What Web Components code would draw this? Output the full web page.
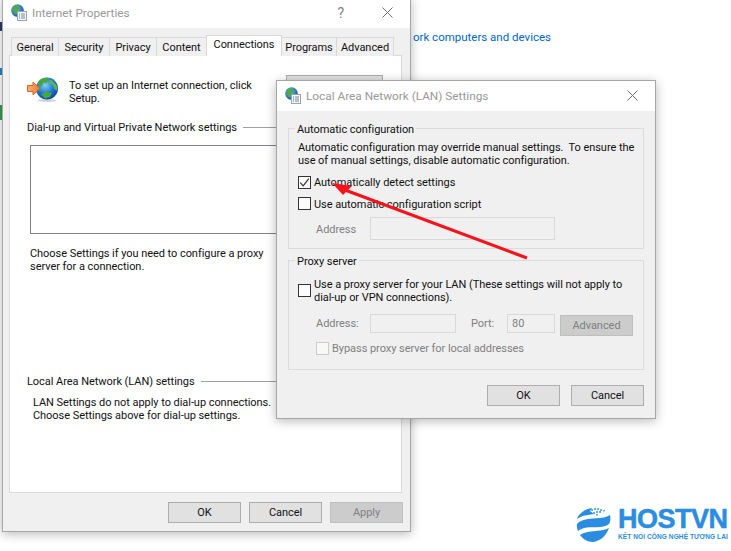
<!DOCTYPE html>
<html>
<head>
<meta charset="utf-8">
<title>LAN Settings</title>
<style>
  html, body { margin: 0; padding: 0; background: #fff; }
  body { width: 731px; height: 551px; overflow: hidden; font: 11px/13px Roboto, sans-serif; letter-spacing: -.05px; color: #111; }
</style>
</head>
<body>
<win-desktop>
  <win-window slot="main" heading="Internet Properties" help style="left:2px;top:-3px;width:409px;height:535px;">
    <win-tabs active="Connections" tabs="General,Security,Privacy,Content,Connections,Programs,Advanced">
      <connections-page></connections-page>
    </win-tabs>
    <win-footer pad="9px 7px 0 0">
      <win-button>OK</win-button>
      <win-button>Cancel</win-button>
      <win-button disabled>Apply</win-button>
    </win-footer>
  </win-window>
  <win-window slot="dialog" heading="Local Area Network (LAN) Settings" style="left:276px;top:80px;width:380px;height:339px;">
    <lan-dialog></lan-dialog>
  </win-window>
</win-desktop>
<script>
"use strict";

const FONT = 'Roboto, sans-serif';

class WinDesktop extends HTMLElement {
  constructor() {
    super();
    const shadowRootEl = this.attachShadow({mode: 'open'});
    shadowRootEl.innerHTML = `
      <style>
        :host { display: block; position: relative; width: 731px; height: 551px; overflow: hidden; background: #fff; }
        .edge { position: absolute; left: 0; top: 0; }
        .link { position: absolute; right: 180px; top: 30px; color: #0066cc; white-space: nowrap; font: 11.5px/14px ${FONT}; letter-spacing: 0; }
        ::slotted(win-window) { position: absolute; }
      </style>
      <svg class="edge" width="3" height="130">
        <rect x="0" y="22" width="2" height="9" fill="#2b3a6a"/>
        <rect x="0" y="68" width="2" height="7" fill="#2a7fc9"/>
        <rect x="0" y="105" width="2" height="15" fill="#3a9a50"/>
      </svg>
      <div class="link">ork computers and devices</div>
      <slot name="main"></slot>
      <slot name="dialog"></slot>
      <red-arrow></red-arrow>
      <hostvn-logo></hostvn-logo>
    `;
  }
}

class WinWindow extends HTMLElement {
  constructor() {
    super();
    const shadowRootEl = this.attachShadow({mode: 'open'});
    shadowRootEl.innerHTML = `
      <style>
        :host { display: flex; flex-direction: column; box-sizing: border-box; background: #f0f0f0; border: 1px solid #a6a6a6; box-shadow: 0 2px 10px rgba(0,0,0,.28); }
        .bar { flex: none; height: 30px; display: flex; align-items: center; background: #fff; padding: 0 0 1px 8px; box-sizing: border-box; }
        .name { margin-left: 5px; color: #999; font: 11.8px/16px ${FONT}; letter-spacing: 0; white-space: nowrap; flex: 1; }
        .help { color: #808080; font: 14px/16px ${FONT}; margin-right: 38px; }
        svg.x { margin-right: 17px; }
        .body { flex: 1; min-height: 0; }
      </style>
      <div class="bar">
        <small-globe></small-globe>
        <span class="name"></span>
        <span class="help"></span>
        <svg class="x" width="11" height="11" viewBox="0 0 11 11"><path d="M.5.5l10 10M10.500.5l-10 10" stroke="#6e6e6e" fill="none"/></svg>
      </div>
      <div class="body"><slot></slot></div>
    `;
    shadowRootEl.querySelector('.name').textContent = this.getAttribute('heading');
    if (this.hasAttribute('help')) {
      shadowRootEl.querySelector('.help').textContent = '?';
    }
  }
}

class SmallGlobe extends HTMLElement {
  constructor() {
    super();
    const shadowRootEl = this.attachShadow({mode: 'open'});
    shadowRootEl.innerHTML = `
      <style>:host { display: block; width: 16px; height: 17px; flex: none; } svg { display: block; }</style>
      <svg width="16" height="17" viewBox="0 0 16 17">
        <defs><radialGradient id="g" cx=".4" cy=".35" r=".7"><stop offset="0" stop-color="#6cc0f0"/><stop offset="1" stop-color="#12509f"/></radialGradient></defs>
        <circle cx="6.500" cy="6.500" r="6.300" fill="url(#g)"/>
        <path d="M2 3.500C4 1.500 7 1 8.500 1.500L9 4 6.500 6 7 9 4.500 10.500 2.500 8 1 6.500z" fill="#4fa84a"/>
        <path d="M9 8l3-1-1 3.500-2 1z" fill="#4fa84a"/>
        <rect x="6.500" y="7.500" width="9" height="9" fill="#f4f7fa" stroke="#9aa3ad"/>
        <path d="M8 10h1M8 12h1M8 14h1" stroke="#2a7fc9"/>
        <path d="M10 10h4M10 12h4M10 14h4" stroke="#7c8791"/>
      </svg>
    `;
  }
}

class BigGlobe extends HTMLElement {
  constructor() {
    super();
    const shadowRootEl = this.attachShadow({mode: 'open'});
    shadowRootEl.innerHTML = `
      <style>:host { display: block; width: 32px; height: 27px; flex: none; } svg { display: block; }</style>
      <svg width="32" height="27" viewBox="0 0 32 27">
        <defs>
          <radialGradient id="s" cx=".42" cy=".35" r=".72"><stop offset="0" stop-color="#7fd0f5"/><stop offset=".55" stop-color="#1c77cf"/><stop offset="1" stop-color="#0a3d8c"/></radialGradient>
          <linearGradient id="a" x1="0" x2="1"><stop offset="0" stop-color="#f7b27a"/><stop offset="1" stop-color="#ee7a2a"/></linearGradient>
        </defs>
        <ellipse cx="20" cy="24.500" rx="9" ry="1.500" fill="#c9d3da"/>
        <circle cx="20" cy="12.500" r="11" fill="url(#s)"/>
        <path d="M11 6C13 3 17 1.500 20 1.700L22 4 19 7 16 6.500 15 10 12.500 11z" fill="#46a83c"/>
        <path d="M22 3.500C25 4 28.500 7 30 10.500L30.500 15 27.500 13 26 9 23 7z" fill="#5cb848"/>
        <path d="M14 18.500l5-3 6 1.500-2 4-5 1.500z" fill="#46a83c"/>
        <path d="M.5 9.500H6V6l7 6.500L6 19v-3.500H.5z" fill="url(#a)" stroke="#d8641c"/>
      </svg>
    `;
  }
}

class WinTabs extends HTMLElement {
  constructor() {
    super();
    const shadowRootEl = this.attachShadow({mode: 'open'});
    shadowRootEl.innerHTML = `
      <style>
        :host { display: block; padding: 7px 0 0 6px; }
        .strip { display: flex; align-items: flex-end; height: 21px; padding-left: 2px; position: relative; z-index: 1; margin-bottom: -1px; }
        .tab { box-sizing: border-box; height: 19px; padding-top: 3px; text-align: center; border: 1px solid #d9d9d9; border-left-width: 0; border-bottom: 0; background: #f0f0f0; white-space: nowrap; }
        .tab:first-child { border-left-width: 1px; }
        .tab.on { height: 21px; background: #fff; padding-top: 2px; border-left-width: 1px; margin-left: -1px; }
        .panel { box-sizing: border-box; width: 393px; height: 438px; background: #fff; border: 1px solid #d9d9d9; }
      </style>
      <div class="strip"></div>
      <div class="panel"><slot></slot></div>
    `;
    const widths = {General: 48, Security: 51, Privacy: 47, Content: 50, Connections: 76, Programs: 55, Advanced: 57};
    const stripEl = shadowRootEl.querySelector('.strip');
    this.getAttribute('tabs').split(',').forEach((name) => {
      const tabEl = document.createElement('div');
      tabEl.className = name === this.getAttribute('active') ? 'tab on' : 'tab';
      tabEl.style.width = widths[name] + 'px';
      tabEl.textContent = name;
      stripEl.appendChild(tabEl);
    });
  }
}

class WinButton extends HTMLElement {
  constructor() {
    super();
    const shadowRootEl = this.attachShadow({mode: 'open'});
    shadowRootEl.innerHTML = `
      <style>
        :host { display: flex; align-items: center; justify-content: center; box-sizing: border-box; flex: none; width: var(--btn-w, 73px); height: 21px; background: #e1e1e1; border: 1px solid #adadad; color: #111; }
        :host([disabled]) { background: #cccccc; border-color: #bfbfbf; color: #808080; }
      </style>
      <slot></slot>
    `;
  }
}

class WinFooter extends HTMLElement {
  constructor() {
    super();
    const shadowRootEl = this.attachShadow({mode: 'open'});
    shadowRootEl.innerHTML = `
      <style>:host { display: flex; justify-content: flex-end; gap: var(--gap, 8px); }</style>
      <slot></slot>
    `;
    this.style.padding = this.getAttribute('pad');
  }
}

class WinSection extends HTMLElement {
  constructor() {
    super();
    const shadowRootEl = this.attachShadow({mode: 'open'});
    shadowRootEl.innerHTML = `
      <style>
        :host { display: flex; align-items: center; gap: 6px; white-space: nowrap; }
        i { flex: 1; height: 1px; background: #a0a0a0; }
      </style>
      <slot></slot><i></i>
    `;
  }
}

class ConnectionsPage extends HTMLElement {
  constructor() {
    super();
    const shadowRootEl = this.attachShadow({mode: 'open'});
    shadowRootEl.innerHTML = `
      <style>
        :host { display: block; padding: 20px 8px 0 17px; }
        .setup { display: flex; height: 38px; }
        .setup big-globe { margin-right: 10px; }
        .setup p { margin: 3px 0 0; width: 217px; flex: none; }
        .setup win-button { --btn-w: 97px; margin-top: -1px; }
        .list { box-sizing: border-box; width: 250px; height: 89px; margin: 11px 0 0 3px; background: #fff; border: 1px solid #82828c; }
        .note { margin: 13px 0 0 3px; }
        .lan { margin-top: 102px; }
        .lantext { margin: 8px 0 0 6px; }
        win-section { margin-top: 7px; }
      </style>
      <div class="setup">
        <big-globe></big-globe>
        <p>To set up an Internet connection, click<br>Setup.</p>
        <win-button></win-button>
      </div>
      <win-section>Dial-up and Virtual Private Network settings</win-section>
      <div class="list"></div>
      <p class="note">Choose Settings if you need to configure a proxy<br>server for a connection.</p>
      <win-section class="lan">Local Area Network (LAN) settings</win-section>
      <p class="lantext">LAN Settings do not apply to dial-up connections.<br>Choose Settings above for dial-up settings.</p>
    `;
  }
}

class WinGroup extends HTMLElement {
  constructor() {
    super();
    const shadowRootEl = this.attachShadow({mode: 'open'});
    shadowRootEl.innerHTML = `
      <style>
        :host { display: block; }
        fieldset { box-sizing: border-box; height: var(--group-h); margin: 0; padding: 0 0 0 9px; border: 1px solid #dcdcdc; min-width: 0; }
        legend { padding: 2px 2px 0; margin-left: -3px; line-height: 13px; }
      </style>
      <fieldset>
        <legend></legend>
        <slot></slot>
      </fieldset>
    `;
    shadowRootEl.querySelector('legend').textContent = this.getAttribute('label');
  }
}

class WinCheck extends HTMLElement {
  constructor() {
    super();
    const shadowRootEl = this.attachShadow({mode: 'open'});
    shadowRootEl.innerHTML = `
      <style>
        :host { display: flex; align-items: flex-start; gap: 3px; white-space: nowrap; }
        .box { box-sizing: border-box; flex: none; width: 13px; height: 13px; background: #fbfbfb; border: 1px solid #333; margin-top: var(--box-top, 0); }
        .text { margin-top: var(--text-top, 0); }
        :host([disabled]) { color: #808080; }
        :host([disabled]) .box { background: #f8f8f8; border-color: #cccccc; }
        svg { display: block; }
      </style>
      <div class="box"></div>
      <div class="text"><slot></slot></div>
    `;
    if (this.hasAttribute('checked')) {
      shadowRootEl.querySelector('.box').innerHTML = '<svg width="11" height="11" viewBox="0 0 11 11"><path d="M1.200 5.600 4.200 8.800 9.800 1.600" stroke="#333" stroke-width="1.200" fill="none"/></svg>';
    }
  }
}

class WinInput extends HTMLElement {
  constructor() {
    super();
    const shadowRootEl = this.attachShadow({mode: 'open'});
    shadowRootEl.innerHTML = `
      <style>
        :host { display: flex; align-items: center; box-sizing: border-box; flex: none; width: var(--input-w); height: var(--input-h, 19px); padding-left: 4px; background: #f0f0f0; border: 1px solid #d9d9d9; color: #808080; }
      </style>
      <slot></slot>
    `;
  }
}

class LanDialog extends HTMLElement {
  constructor() {
    super();
    const shadowRootEl = this.attachShadow({mode: 'open'});
    shadowRootEl.innerHTML = `
      <style>
        :host { display: block; padding: 10px 11px 0; }
        p { margin: 5px 0 0; white-space: nowrap; }
        .row { display: flex; align-items: center; color: #808080; }
        .row .lbl { flex: none; width: 54px; margin-left: 18px; }
        .addr .lbl { padding-top: 2px; }
        .port { margin-left: 15px; width: 36px; flex: none; }
        .first { margin-top: 9px; }
        .second { margin-top: 8px; --text-top: 1px; }
        .addr { margin-top: 6px; }
        .proxy { margin-top: 10px; --box-top: 6px; }
        .addr2 { margin-top: 10px; align-items: flex-start; line-height: 19px; }
        .addr2 win-button { margin: 1px 0 0 5px; line-height: 13px; }
        .bypass { margin: 6px 0 0 18px; }
        win-group + win-group { margin-top: 4px; }
        win-footer { --gap: 11px; }
      </style>
      <win-group label="Automatic configuration" style="--group-h: 128px">
        <p>Automatic configuration may override manual settings.&nbsp; To ensure the<br>use of manual settings, disable automatic configuration.</p>
        <win-check class="first" checked>Automatically detect settings</win-check>
        <win-check class="second">Use automatic configuration script</win-check>
        <div class="row addr"><span class="lbl">Address</span><win-input style="--input-w:185px;--input-h:23px"></win-input></div>
      </win-group>
      <win-group label="Proxy server" style="--group-h: 117px">
        <win-check class="proxy">Use a proxy server for your LAN (These settings will not apply to<br>dial-up or VPN connections).</win-check>
        <div class="row addr2">
          <span class="lbl">Address:</span><win-input style="--input-w:86px"></win-input>
          <span class="port">Port:</span><win-input style="--input-w:48px">80</win-input>
          <win-button disabled>Advanced</win-button>
        </div>
        <win-check class="bypass" disabled>Bypass proxy server for local addresses</win-check>
      </win-group>
      <win-footer pad="15px 0 0 0">
        <win-button>OK</win-button>
        <win-button>Cancel</win-button>
      </win-footer>
    `;
  }
}

class RedArrow extends HTMLElement {
  constructor() {
    super();
    const shadowRootEl = this.attachShadow({mode: 'open'});
    shadowRootEl.innerHTML = `
      <style>:host { position: absolute; left: 320px; top: 170px; width: 220px; height: 100px; }</style>
      <svg width="220" height="100" viewBox="320 170 220 100">
        <path d="M527 258 345 190" stroke="#f5141c" stroke-width="3.200" fill="none"/>
        <path d="M332 183 352 186 343 195z" fill="#f5141c"/>
      </svg>
    `;
  }
}

class HostvnLogo extends HTMLElement {
  constructor() {
    super();
    const shadowRootEl = this.attachShadow({mode: 'open'});
    shadowRootEl.innerHTML = `
      <style>
        :host { position: absolute; left: 576px; top: 506px; display: flex; gap: 7px; color: #2a8de2; font-family: "Liberation Sans", sans-serif; font-weight: 700; letter-spacing: 0; }
        .brand { font-size: 27px; line-height: 26px; height: 27px; letter-spacing: -.5px; -webkit-text-stroke: .5px #2a8de2; white-space: nowrap; }
        .tag { font-size: 6.600px; line-height: 8px; white-space: nowrap; letter-spacing: .05px; }
        svg { display: block; flex: none; }
      </style>
      <svg width="35" height="37" viewBox="0 0 35 37">
        <path d="M1 13C3 7 9 3 16 2L14 5 18 8 9 9.500C6 10 3 11.500 1 13z" fill="#2a8de2"/>
        <path d="M15 3h2v2h-2zM18 2h2v2h-2zM21 2h2v2h-2zM24 3h2v2h-2zM17 6h2v2h-2zM20 5h2v2h-2zM23 5h2v2h-2zM27 4h2v1.500h-2zM20 8h2v1.500h-2z" fill="#2a8de2" opacity=".7"/>
        <path d="M1 18C5 13 15 12.500 23 12 27 11.700 31 11 34 9 35 13 34 17 33 18 27 23 15 20 8 22 5 23 3 24 2 25 1 22 .5 20 1 18z" fill="#2a8de2"/>
        <path d="M4 29C9 25 20 25.500 27 24 30 23.500 32 22.500 33 21.500 31 29 25 35 17 36 11 36 7 33 4 29z" fill="#2a8de2"/>
      </svg>
      <div>
        <div class="brand">HOSTVN</div>
        <div class="tag">KẾT NỐI CÔNG NGHỆ TƯƠNG LAI</div>
      </div>
    `;
  }
}

window.customElements.define('small-globe', SmallGlobe);
window.customElements.define('big-globe', BigGlobe);
window.customElements.define('win-button', WinButton);
window.customElements.define('win-footer', WinFooter);
window.customElements.define('win-section', WinSection);
window.customElements.define('win-group', WinGroup);
window.customElements.define('win-check', WinCheck);
window.customElements.define('win-input', WinInput);
window.customElements.define('win-tabs', WinTabs);
window.customElements.define('connections-page', ConnectionsPage);
window.customElements.define('lan-dialog', LanDialog);
window.customElements.define('red-arrow', RedArrow);
window.customElements.define('hostvn-logo', HostvnLogo);
window.customElements.define('win-window', WinWindow);
window.customElements.define('win-desktop', WinDesktop);
</script>
</body>
</html>
